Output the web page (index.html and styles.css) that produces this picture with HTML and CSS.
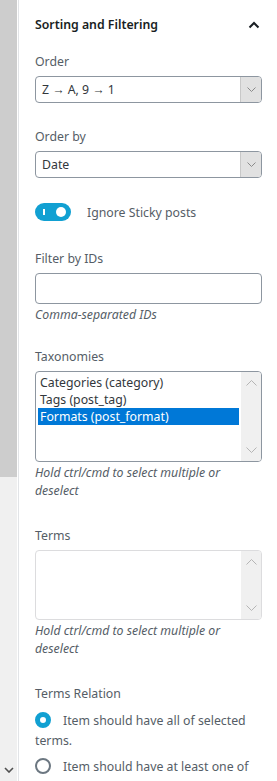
FILE: index.html
```html
<!DOCTYPE html>
<html lang="en">
<head>
    <meta charset="UTF-8">
    <meta name="viewport" content="width=device-width, initial-scale=1.0">
    <title>Sorting and Filtering</title>
    <link rel="stylesheet" href="styles.css">
</head>
<body>
    <div class="layout">
        <div class="side-scroll">
            <div class="side-thumb"></div>
            <div class="side-track">
                <svg class="side-arrow" width="10" height="6" viewBox="0 0 10 6"><path d="M1 1l4 4 4-4" fill="none" stroke="#505050" stroke-width="1.6"/></svg>
            </div>
        </div>

        <div class="panel">
            <div class="panel-header">
                <span class="panel-title">Sorting and Filtering</span>
                <svg class="panel-toggle" width="12" height="8" viewBox="0 0 12 8"><path d="M1.5 6.5L6 2l4.5 4.5" fill="none" stroke="#191e23" stroke-width="2"/></svg>
            </div>

            <div class="field">
                <div class="field-label">Order</div>
                <div class="select">
                    <span class="select-value">Z → A, 9 → 1</span>
                    <span class="select-arrow"><svg width="9" height="5" viewBox="0 0 9 5"><path d="M.5.5l4 4 4-4" fill="none" stroke="#8a8a8a"/></svg></span>
                </div>
            </div>

            <div class="field">
                <div class="field-label">Order by</div>
                <div class="select">
                    <span class="select-value">Date</span>
                    <span class="select-arrow"><svg width="9" height="5" viewBox="0 0 9 5"><path d="M.5.5l4 4 4-4" fill="none" stroke="#8a8a8a"/></svg></span>
                </div>
            </div>

            <div class="toggle-row">
                <span class="toggle is-on">
                    <span class="toggle-bar"></span>
                    <span class="toggle-knob"></span>
                </span>
                <span class="toggle-label">Ignore Sticky posts</span>
            </div>

            <div class="field field-ids">
                <div class="field-label">Filter by IDs</div>
                <div class="text-input"></div>
                <div class="field-help">Comma-separated IDs</div>
            </div>

            <div class="field field-tax">
                <div class="field-label">Taxonomies</div>
                <div class="listbox listbox-tax">
                    <div class="listbox-options">
                        <div class="option">Categories (category)</div>
                        <div class="option">Tags (post_tag)</div>
                        <div class="option is-selected">Formats (post_format)</div>
                    </div>
                    <div class="listbox-scroll">
                        <svg width="11" height="6" viewBox="0 0 11 6"><path d="M.5 5.5l5-5 5 5" fill="none" stroke="#b5b5b5"/></svg>
                        <svg width="11" height="6" viewBox="0 0 11 6"><path d="M.5.5l5 5 5-5" fill="none" stroke="#b5b5b5"/></svg>
                    </div>
                </div>
                <div class="field-help">Hold ctrl/cmd to select multiple or deselect</div>
            </div>

            <div class="field field-terms">
                <div class="field-label">Terms</div>
                <div class="listbox listbox-terms">
                    <div class="listbox-options"></div>
                    <div class="listbox-scroll">
                        <svg width="11" height="6" viewBox="0 0 11 6"><path d="M.5 5.5l5-5 5 5" fill="none" stroke="#b5b5b5"/></svg>
                        <svg width="11" height="6" viewBox="0 0 11 6"><path d="M.5.5l5 5 5-5" fill="none" stroke="#b5b5b5"/></svg>
                    </div>
                </div>
                <div class="field-help">Hold ctrl/cmd to select multiple or deselect</div>
            </div>

            <div class="field">
                <div class="field-label">Terms Relation</div>
                <div class="radio-option">
                    <span class="radio is-checked"></span>Item should have all of selected terms.
                </div>
                <div class="radio-option">
                    <span class="radio"></span>Item should have at least one of selected terms.
                </div>
            </div>
        </div>
    </div>
</body>
</html>
```

FILE: styles.css
```css
body {
    margin: 0;
    font-family: "Noto Sans", "Open Sans", sans-serif;
    font-size: 12.3px;
    color: #555d66;
    background-color: #fff;
    overflow: hidden;
}
.layout {
    display: flex;
    height: 781px;
}
.side-scroll {
    width: 17px;
    display: flex;
    flex-direction: column;
    margin-right: 1px;
}
.side-thumb {
    height: 477px;
    background-color: #cdcdcd;
}
.side-track {
    flex: 1;
    background-color: #f0f0f0;
    display: flex;
    align-items: flex-end;
    justify-content: center;
    padding-bottom: 8px;
}
.panel {
    flex: 1;
    border-left: 1px solid #e2e4e7;
    padding: 0 15px 0 16px;
}
.panel-header {
    display: flex;
    justify-content: space-between;
    align-items: center;
    padding: 16px 0 19px;
    line-height: 18px;
}
.panel-title {
    color: #191e23;
    font-weight: 600;
}
.panel-toggle {
    margin-right: 2px;
}
.field {
    margin-bottom: 25px;
}
.field-ids {
    margin-bottom: 24px;
}
.field-tax {
    margin-bottom: 27px;
}
.field-terms {
    margin-bottom: 27px;
}
.field-label {
    line-height: 18px;
    margin-bottom: 5px;
}
.select {
    display: flex;
    height: 27px;
    box-sizing: border-box;
    border: 1px solid #8d96a0;
    border-radius: 4px;
    color: #32373c;
    overflow: hidden;
}
.select-value {
    flex: 1;
    line-height: 25px;
    padding-left: 6px;
}
.select-arrow {
    width: 20px;
    background-color: #e1e1e1;
    border-left: 1px solid #c8c8c8;
    display: flex;
    align-items: center;
    justify-content: center;
}
.toggle-row {
    display: flex;
    align-items: center;
    margin: 1px 0 29px;
    height: 18px;
}
.toggle {
    position: relative;
    flex: none;
    width: 36px;
    height: 18px;
    border-radius: 9px;
    background-color: #11a0d2;
}
.toggle-bar {
    position: absolute;
    left: 8px;
    top: 6px;
    width: 2px;
    height: 6px;
    background-color: #fff;
}
.toggle-knob {
    position: absolute;
    right: 5px;
    top: 4px;
    width: 10px;
    height: 10px;
    border-radius: 50%;
    background-color: #fff;
}
.toggle-label {
    margin-left: 16px;
}
.text-input {
    height: 31px;
    box-sizing: border-box;
    border: 1px solid #8d96a0;
    border-radius: 4px;
}
.field-help {
    margin-top: 2px;
    line-height: 18px;
    font-style: italic;
}
.listbox {
    display: flex;
    box-sizing: border-box;
    border: 1px solid #8d96a0;
    border-radius: 4px;
    overflow: hidden;
}
.listbox-tax {
    height: 91px;
}
.listbox-terms {
    height: 70px;
    border-color: #dcdcde;
}
.listbox-options {
    flex: 1;
    padding: 2px 2px 0;
    color: #32373c;
}
.option {
    line-height: 17px;
    padding-left: 2px;
}
.option.is-selected {
    background-color: #0078d7;
    color: #fff;
}
.listbox-scroll {
    width: 20px;
    background-color: #f0f0f0;
    display: flex;
    flex-direction: column;
    justify-content: space-between;
    align-items: center;
    padding: 8px 0;
}
.radio-option {
    line-height: 20px;
    margin-top: 8px;
}
.radio-option + .radio-option {
    margin-top: 6px;
}
.radio {
    display: inline-block;
    vertical-align: -3px;
    width: 16px;
    height: 16px;
    box-sizing: border-box;
    border: 2px solid #6c7781;
    border-radius: 50%;
    margin-right: 12px;
}
.radio.is-checked {
    border: 5px solid #11a0d2;
}
```
